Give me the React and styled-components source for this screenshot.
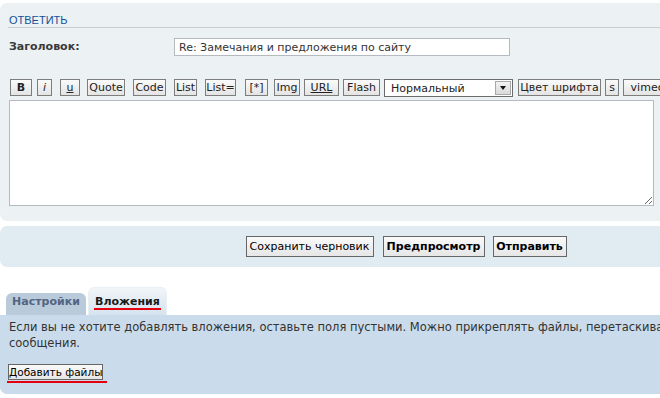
import React from 'react';
import styled, { createGlobalStyle } from 'styled-components';

const GlobalStyle = createGlobalStyle`
  html, body {
    margin: 0;
    padding: 0;
    background: #fff;
    overflow: hidden;
  }
  body {
    font-family: "DejaVu Sans", Verdana, sans-serif;
    color: #28313f;
  }
`;

const Page = styled.div`
  width: 812px;
  padding-top: 3px;
`;

const PostPanel = styled.div`
  background: #ecf1f3;
  border-radius: 7px;
  padding: 10px 0 15px 8px;
`;

const Heading = styled.h3`
  margin: 0;
  padding-left: 1px;
  font-family: "Liberation Sans", Arial, sans-serif;
  font-size: 11px;
  font-weight: normal;
  line-height: 14px;
  color: #115098;
  text-transform: uppercase;
  border-bottom: 1px solid #ccc;
`;

const TitleRow = styled.div`
  display: flex;
  align-items: flex-start;
  margin-top: 10px;
  padding-left: 1px;
`;

const Label = styled.label`
  width: 165px;
  padding-top: 2px;
  font-size: 11px;
  font-weight: bold;
  color: #3a3a3a;
`;

const TitleInput = styled.input`
  box-sizing: border-box;
  width: 336px;
  height: 18px;
  padding: 0 4px;
  border: 1px solid #b4bac0;
  background: #fff;
  font-family: "DejaVu Sans", Verdana, sans-serif;
  font-size: 11px;
  color: #333;
  outline: none;
`;

const Toolbar = styled.div`
  display: flex;
  align-items: flex-start;
  margin-top: 23px;
`;

const ToolButton = styled.button`
  flex-shrink: 0;
  box-sizing: border-box;
  width: ${p => p.$w}px;
  height: 17px;
  margin: 0 0 0 ${p => p.$ml}px;
  padding: 0;
  border: 1px solid #7d7d7d;
  background: linear-gradient(#fafafa, #e4e4e4);
  font-family: "DejaVu Sans", Verdana, sans-serif;
  font-size: 11px;
  line-height: 15px;
  color: #222;
  font-weight: ${p => (p.$bold ? 'bold' : 'normal')};
  font-style: ${p => (p.$italic ? 'italic' : 'normal')};
  text-decoration: ${p => (p.$under ? 'underline' : 'none')};
  white-space: nowrap;
`;

const SizeSelect = styled.div`
  flex-shrink: 0;
  box-sizing: border-box;
  display: flex;
  align-items: center;
  justify-content: space-between;
  width: ${p => p.$w}px;
  height: 18px;
  margin-left: ${p => p.$ml}px;
  padding: 0 1px 0 6px;
  border: 1px solid #6b6b6b;
  background: #fff;
  font-size: 11px;
  color: #222;
`;

const SelectArrow = styled.span`
  box-sizing: border-box;
  display: flex;
  align-items: center;
  justify-content: center;
  width: 16px;
  height: 14px;
  border: 1px solid #a9a9a9;
  background: linear-gradient(#f2f2f2, #d9d9d9);

  &::after {
    content: '';
    border-left: 3px solid transparent;
    border-right: 3px solid transparent;
    border-top: 4px solid #111;
  }
`;

const MessageBox = styled.textarea`
  display: block;
  box-sizing: border-box;
  width: 645px;
  height: 106px;
  margin: 3px 0 0 1px;
  border: 1px solid #b4bac0;
  background: #fff;
  outline: none;
`;

const SubmitPanel = styled.div`
  display: flex;
  justify-content: center;
  margin-top: 5px;
  padding: 10px 0;
  background: #e1ebf2;
  border-radius: 7px;
`;

const SubmitButton = styled.button`
  box-sizing: border-box;
  width: ${p => p.$w}px;
  height: 21px;
  margin: 0 0 0 ${p => p.$ml}px;
  padding: 0;
  border: 1px solid #666;
  background: linear-gradient(#fafafa, #e6e6e6);
  font-family: "DejaVu Sans", Verdana, sans-serif;
  font-size: 11px;
  color: #000;
  font-weight: ${p => (p.$bold ? 'bold' : 'normal')};
`;

const Tabs = styled.div`
  display: flex;
  align-items: flex-end;
  margin-top: 20px;
  padding-left: 6px;
`;

const Tab = styled.div`
  box-sizing: border-box;
  width: ${p => p.$w}px;
  height: ${p => (p.$active ? 28 : 22)}px;
  margin-right: 2px;
  padding-top: ${p => (p.$active ? 7 : 1)}px;
  text-align: center;
  font-size: 11px;
  font-weight: bold;
  line-height: ${p => (p.$active ? 13 : 15)}px;
  border-radius: 6px 6px 0 0;
  color: ${p => (p.$active ? '#1a1a1a' : '#536482')};
  background: ${p =>
    p.$active ? 'linear-gradient(#f1f5f8, #d6e3ee)' : '#b9cbda'};
  border: ${p => (p.$active ? '1px solid #e9f0f5' : 'none')};
  border-bottom: none;
`;

// red hand-drawn marks from the screenshot
const Marked = styled.span`
  display: ${p => (p.$block ? 'block' : 'inline-block')};
  width: fit-content;
  padding: ${p => p.$pad};
  margin-left: ${p => p.$ml}px;
  border-bottom: 2px solid #e4000f;
`;

const AttachPanel = styled.div`
  padding: 4px 0 11px 8px;
  background: #cadceb;
  border-radius: 0 0 0 7px;
`;

const Explain = styled.p`
  margin: 0 0 13px 1px;
  font-size: 11.5px;
  line-height: 16px;
  color: #333;
  white-space: nowrap;
`;

const SmallButton = styled.button`
  box-sizing: border-box;
  display: block;
  width: 95px;
  height: 16px;
  padding: 0;
  border: 1px solid #666;
  background: linear-gradient(#fafafa, #e6e6e6);
  font-family: "DejaVu Sans", Verdana, sans-serif;
  font-size: 10.5px;
  line-height: 14px;
  color: #000;
  white-space: nowrap;
`;

// left/right edges measured off the bbcode toolbar
const tools = [
  { label: 'B', x: [10, 32], bold: true },
  { label: 'i', x: [37, 52], italic: true },
  { label: 'u', x: [60, 80], under: true },
  { label: 'Quote', x: [87, 125] },
  { label: 'Code', x: [133, 166] },
  { label: 'List', x: [174, 197] },
  { label: 'List=', x: [205, 236] },
  { label: '[*]', x: [245, 268] },
  { label: 'Img', x: [274, 300] },
  { label: 'URL', x: [304, 339], under: true },
  { label: 'Flash', x: [343, 380] },
  { select: 'Нормальный', x: [384, 513] },
  { label: 'Цвет шрифта', x: [518, 601] },
  { label: 's', x: [605, 619] },
  { label: 'vimeo', x: [623, 672] },
];

export default function App() {
  let prev = 8;
  return (
    <Page>
      <GlobalStyle />
      <PostPanel>
        <Heading>Ответить</Heading>
        <TitleRow>
          <Label>Заголовок:</Label>
          <TitleInput readOnly value="Re: Замечания и предложения по сайту" />
        </TitleRow>
        <Toolbar>
          {tools.map(t => {
            const ml = t.x[0] - prev;
            const w = t.x[1] - t.x[0];
            prev = t.x[1];
            if (t.select) {
              return (
                <SizeSelect key={t.select} $w={w} $ml={ml}>
                  {t.select}
                  <SelectArrow />
                </SizeSelect>
              );
            }
            return (
              <ToolButton
                key={t.label}
                $w={w}
                $ml={ml}
                $bold={t.bold}
                $italic={t.italic}
                $under={t.under}
              >
                {t.label}
              </ToolButton>
            );
          })}
        </Toolbar>
        <MessageBox />
      </PostPanel>

      <SubmitPanel>
        <SubmitButton $w={128} $ml={0}>Сохранить черновик</SubmitButton>
        <SubmitButton $w={102} $ml={9} $bold>Предпросмотр</SubmitButton>
        <SubmitButton $w={74} $ml={8} $bold>Отправить</SubmitButton>
      </SubmitPanel>

      <Tabs>
        <Tab $w={80}>Настройки</Tab>
        <Tab $w={79} $active>
          <Marked $pad="0 1px" $ml={0}>Вложения</Marked>
        </Tab>
      </Tabs>
      <AttachPanel>
        <Explain>
          Если вы не хотите добавлять вложения, оставьте поля пустыми. Можно прикреплять файлы, перетаскивая их в окно
          <br />
          сообщения.
        </Explain>
        <Marked $block $pad="0 4px 1px 1px" $ml={-1}>
          <SmallButton>Добавить файлы</SmallButton>
        </Marked>
      </AttachPanel>
    </Page>
  );
}
